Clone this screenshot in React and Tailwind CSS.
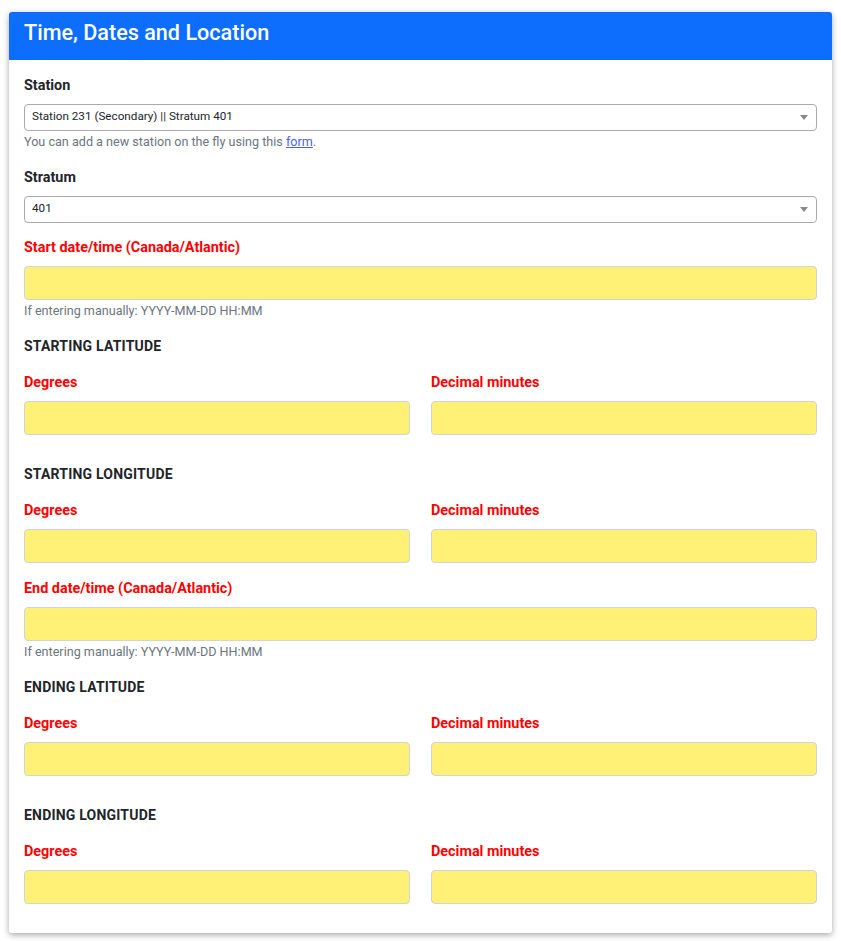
import React from "react";

const font = { fontFamily: "Roboto, 'Liberation Sans', sans-serif" };

function Label({ children, red }) {
  return (
    <div className={`text-[14.4px] leading-[21px] font-bold mb-[8px] ${red ? "text-[#ff0000]" : "text-[#212529]"}`}>
      {children}
    </div>
  );
}

function Heading({ children }) {
  return (
    <div className="text-[14px] leading-[21px] font-bold uppercase tracking-[0.2px] text-[#212529] mb-[15px]">
      {children}
    </div>
  );
}

function YellowInput() {
  return <div className="h-[34px] bg-[#fff176] border border-[#ced4da] rounded-[4px]" />;
}

function Select({ value }) {
  return (
    <div className="h-[27px] border border-[#aaaaaa] rounded-[4px] flex items-center justify-between pl-[7px] pr-[8px] bg-white">
      <span className="text-[11.7px] leading-[14px] text-[#212529] mb-[4px]">{value}</span>
      <svg width="8" height="5" viewBox="0 0 8 5">
        <path d="M0 0 L8 0 L4 5 Z" fill="#888" />
      </svg>
    </div>
  );
}

function Help({ children }) {
  return <div className="text-[12.6px] leading-[18px] mt-[2px] text-[#6c757d]">{children}</div>;
}

function CoordBlock({ title, last }) {
  return (
    <div className={last ? "" : "mb-[29px]"}>
      <Heading>{title}</Heading>
      <div className="grid grid-cols-2 gap-x-[21px]">
        <div>
          <Label red>Degrees</Label>
          <YellowInput />
        </div>
        <div>
          <Label red>Decimal minutes</Label>
          <YellowInput />
        </div>
      </div>
    </div>
  );
}

export default function App() {
  return (
    <div className="min-h-[941px] bg-white pt-[12px] px-[9px]" style={font}>
      <div className="bg-white rounded-[3px] shadow-[0_2px_6px_rgba(0,0,0,0.35)] overflow-hidden">
        <div className="bg-[#0d6efd] h-[48px] px-[15px] pt-[8px]">
          <h2 className="text-white text-[21.6px] font-medium leading-[26px]">Time, Dates and Location</h2>
        </div>
        <div className="px-[15px] pt-[15px] pb-[29px]">
          <Label>Station</Label>
          <Select value="Station 231 (Secondary) || Stratum 401" />
          <Help>
            You can add a new station on the fly using this{" "}
            <span className="text-[#4b5fe8] underline">form</span>.
          </Help>

          <div className="mt-[16px]">
            <Label>Stratum</Label>
            <Select value="401" />
          </div>

          <div className="mt-[14px]">
            <Label red>Start date/time (Canada/Atlantic)</Label>
            <YellowInput />
            <Help>If entering manually: YYYY-MM-DD HH:MM</Help>
          </div>

          <div className="mt-[16px]">
            <CoordBlock title="Starting Latitude" />
            <CoordBlock title="Starting Longitude" last />
          </div>

          <div className="mt-[15px]">
            <Label red>End date/time (Canada/Atlantic)</Label>
            <YellowInput />
            <Help>If entering manually: YYYY-MM-DD HH:MM</Help>
          </div>

          <div className="mt-[16px]">
            <CoordBlock title="Ending Latitude" />
            <CoordBlock title="Ending Longitude" last />
          </div>
        </div>
      </div>
    </div>
  );
}
